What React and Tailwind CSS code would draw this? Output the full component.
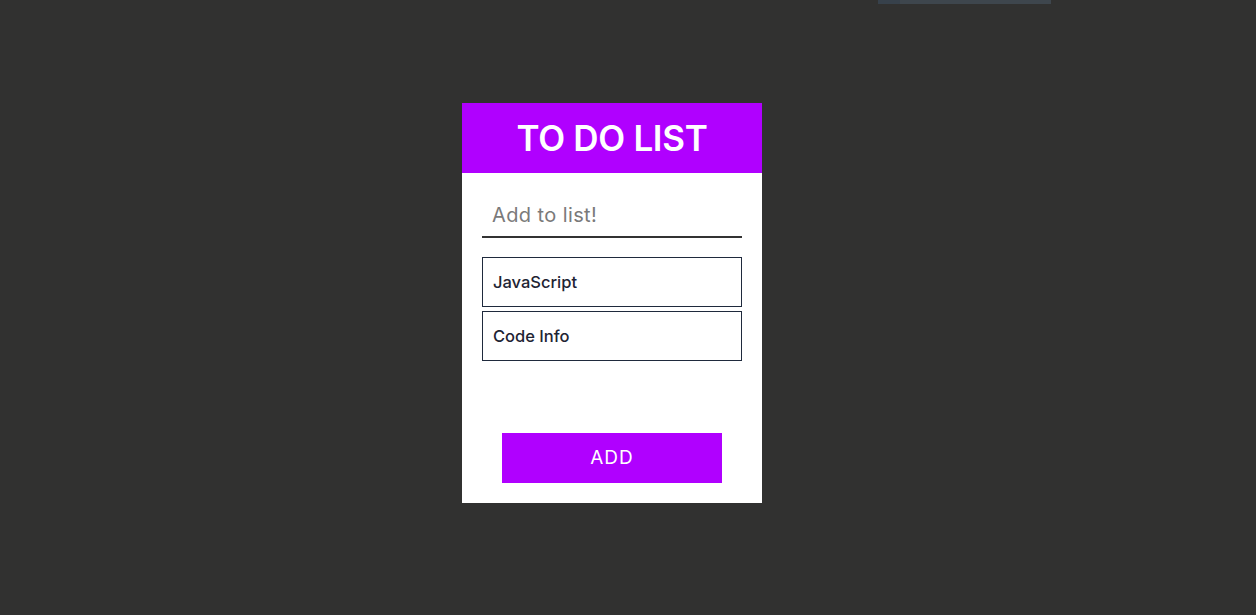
import { useState } from 'react';

export default function App() {
  const [items, setItems] = useState(['JavaScript', 'Code Info']);
  const [text, setText] = useState('');

  const add = () => {
    if (!text.trim()) return;
    setItems([...items, text.trim()]);
    setText('');
  };

  return (
    <div className="relative min-h-[615px] w-full bg-[#313130] font-['Inter','Open_Sans',sans-serif]">
      {/* strip at the top edge */}
      <div className="absolute left-[878px] top-0 flex h-[4px] w-[173px]">
        <div className="w-[22px] bg-[#37414b]" />
        <div className="flex-1 bg-[#3e464d]" />
      </div>

      <div className="flex justify-center pt-[103px] pr-8">
        <div className="flex h-[400px] w-[300px] flex-col bg-white">
          <div className="flex h-[70px] items-center justify-center bg-[#b000ff]">
            <h1 className="text-[35px] font-semibold tracking-[-0.3px] text-white">TO DO LIST</h1>
          </div>

          <div className="flex flex-1 flex-col px-5 pt-5 pb-5">
            <input
              value={text}
              onChange={(e) => setText(e.target.value)}
              placeholder="Add to list!"
              className="h-[45px] w-full border-b-2 border-[#333333] px-[10px] text-[20px] tracking-[0.4px] text-[#333] outline-none placeholder:text-[#7a7a7a]"
            />

            <ul className="mt-[19px] flex flex-col gap-[4px]">
              {items.map((item) => (
                <li
                  key={item}
                  className="flex h-[50px] items-center border border-[#1f2a3d] px-[10px] pt-[1px] text-[16.5px] font-medium text-[#1e2433]"
                >
                  {item}
                </li>
              ))}
            </ul>

            <div className="mt-auto flex justify-center">
              <button
                onClick={add}
                className="h-[50px] w-[220px] bg-[#b000ff] text-[19px] tracking-[1px] text-white"
              >
                ADD
              </button>
            </div>
          </div>
        </div>
      </div>
    </div>
  );
}
